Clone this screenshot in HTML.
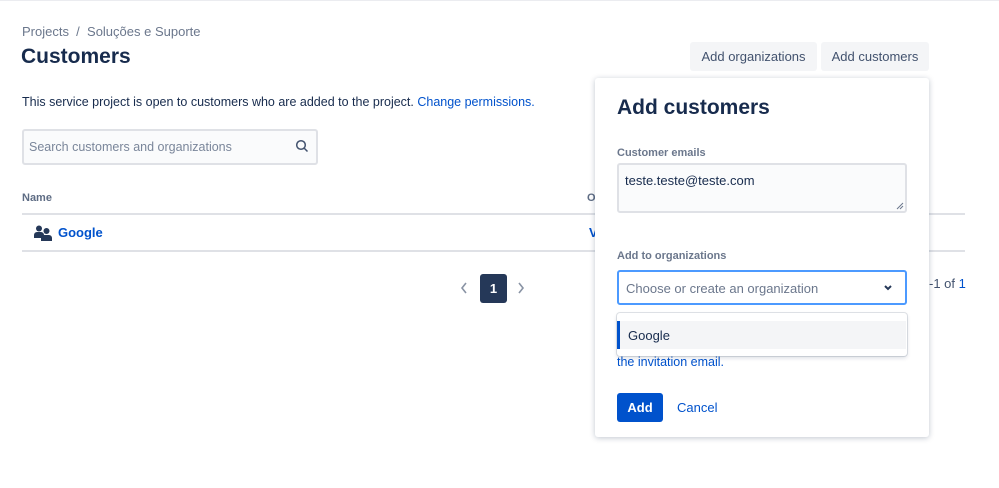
<!DOCTYPE html>
<html><head><meta charset="utf-8"><style>
*{box-sizing:border-box;margin:0;padding:0}
body{width:999px;height:488px;background:#fff;font-family:"Liberation Sans",sans-serif;color:#172b4d;position:relative;overflow:hidden;font-size:13px}
.a{position:absolute;white-space:nowrap}
a{color:#0052cc;text-decoration:none}
.btn{position:absolute;background:#f4f5f7;border-radius:3px;height:29px;line-height:29px;font-size:13px;color:#42526e;text-align:center}
</style></head><body>
<div style="position:absolute;left:0;top:0;width:999px;height:1px;background:#ebecf0"></div>
<div class="a" style="left:22px;top:24px;color:#6b778c;font-size:13px">Projects &nbsp;/&nbsp; Soluções e Suporte</div>
<div class="a" style="left:21px;top:45px;font-size:21px;font-weight:bold">Customers</div>
<div class="a" style="left:22px;top:95px;font-size:12.5px">This service project is open to customers who are added to the project. <a>Change permissions.</a></div>
<div style="position:absolute;left:22px;top:129px;width:296px;height:36px;border:2px solid #dfe1e6;border-radius:3px;background:#fafbfc"></div>
<div class="a" style="left:29px;top:140px;color:#7a869a;font-size:12.5px">Search customers and organizations</div>
<svg class="a" style="left:295px;top:139px" width="14" height="14" viewBox="0 0 14 14"><circle cx="6" cy="6" r="4.3" fill="none" stroke="#42526e" stroke-width="1.5"/><path d="M9 9l3.5 3.5" stroke="#42526e" stroke-width="1.5"/></svg>
<div class="a" style="left:22px;top:192px;font-size:11px;color:#5e6c84;font-weight:bold">Name</div>
<div class="a" style="left:587px;top:192px;font-size:11px;color:#5e6c84;font-weight:bold">O</div>
<div style="position:absolute;left:22px;top:213px;width:943px;height:2px;background:#dfe1e6"></div>
<svg class="a" style="left:34px;top:225px" width="18" height="16" viewBox="0 0 18 16"><circle cx="5" cy="3.5" r="3" fill="#253858"/><path d="M0 13V10a3 3 0 0 1 3-3h4a3 3 0 0 1 3 3v3z" fill="#253858"/><circle cx="12.5" cy="6" r="3" fill="#253858"/><path d="M7 16v-3a3 3 0 0 1 3-3h5a3 3 0 0 1 3 3v3z" fill="#253858"/></svg>
<div class="a" style="left:58px;top:225px;font-size:13px;font-weight:bold;color:#0052cc">Google</div>
<div class="a" style="left:589px;top:225px;font-size:13px;color:#0052cc;font-weight:bold">V</div>
<div style="position:absolute;left:22px;top:250px;width:943px;height:2px;background:#dfe1e6"></div>
<svg class="a" style="left:460px;top:282px" width="8" height="12" viewBox="0 0 8 12"><path d="M6 1L2 6l4 5" fill="none" stroke="#8993a4" stroke-width="1.6"/></svg>
<div style="position:absolute;left:480px;top:274px;width:27px;height:29px;background:#253858;border-radius:3px;color:#fff;font-weight:bold;text-align:center;line-height:29px;font-size:13px">1</div>
<svg class="a" style="left:517px;top:282px" width="8" height="12" viewBox="0 0 8 12"><path d="M2 1l4 5-4 5" fill="none" stroke="#8993a4" stroke-width="1.6"/></svg>
<div class="a" style="left:929px;top:276px;font-size:13px;color:#42526e">-1 of <a>1</a></div>
<div class="btn" style="left:690px;top:42px;width:127px">Add organizations</div>
<div class="btn" style="left:821px;top:42px;width:108px">Add customers</div>
<div style="position:absolute;left:595px;top:78px;width:334px;height:359px;background:#fff;border-radius:3px;box-shadow:0 1px 6px rgba(9,30,66,.25)"></div>
<div class="a" style="left:617px;top:96px;font-size:21px;font-weight:bold">Add customers</div>
<div class="a" style="left:617px;top:147px;font-size:11px;color:#6b778c;font-weight:bold">Customer emails</div>
<div style="position:absolute;left:617px;top:163px;width:290px;height:50px;border:2px solid #dfe1e6;border-radius:3px;background:#fafbfc"></div>
<svg class="a" style="left:896px;top:202px" width="8" height="8" viewBox="0 0 8 8"><path d="M1 7L7 1M4 7l3-3" stroke="#6b778c" stroke-width="1"/></svg>
<div class="a" style="left:625px;top:173px;font-size:13px">teste.teste@teste.com</div>
<div class="a" style="left:617px;top:250px;font-size:11px;color:#6b778c;font-weight:bold">Add to organizations</div>
<div style="position:absolute;left:617px;top:270px;width:290px;height:35px;border:2px solid #4c9aff;border-radius:3px;background:#fff"></div>
<div class="a" style="left:626px;top:281px;font-size:13px;color:#6b778c">Choose or create an organization</div>
<svg class="a" style="left:883px;top:284px" width="10" height="8" viewBox="0 0 10 8"><path d="M2 2l3 3 3-3" fill="none" stroke="#253858" stroke-width="2"/></svg>
<div class="a" style="left:617px;top:355px;font-size:12.5px;color:#0052cc">the invitation email.</div>
<div style="position:absolute;left:617px;top:313px;width:290px;height:43px;background:#fff;border-radius:3px;box-shadow:0 0 0 1px rgba(9,30,66,.12),0 2px 4px rgba(9,30,66,.15)"></div>
<div style="position:absolute;left:617px;top:321px;width:289px;height:28px;background:#f4f5f7;border-left:3px solid #0052cc"></div>
<div class="a" style="left:628px;top:328px;font-size:13px;color:#172b4d">Google</div>
<div style="position:absolute;left:617px;top:393px;width:46px;height:29px;background:#0052cc;border-radius:3px;color:#fff;font-weight:bold;text-align:center;line-height:29px">Add</div>
<div class="a" style="left:677px;top:400px;color:#0052cc;font-size:13px">Cancel</div>
</body></html>
